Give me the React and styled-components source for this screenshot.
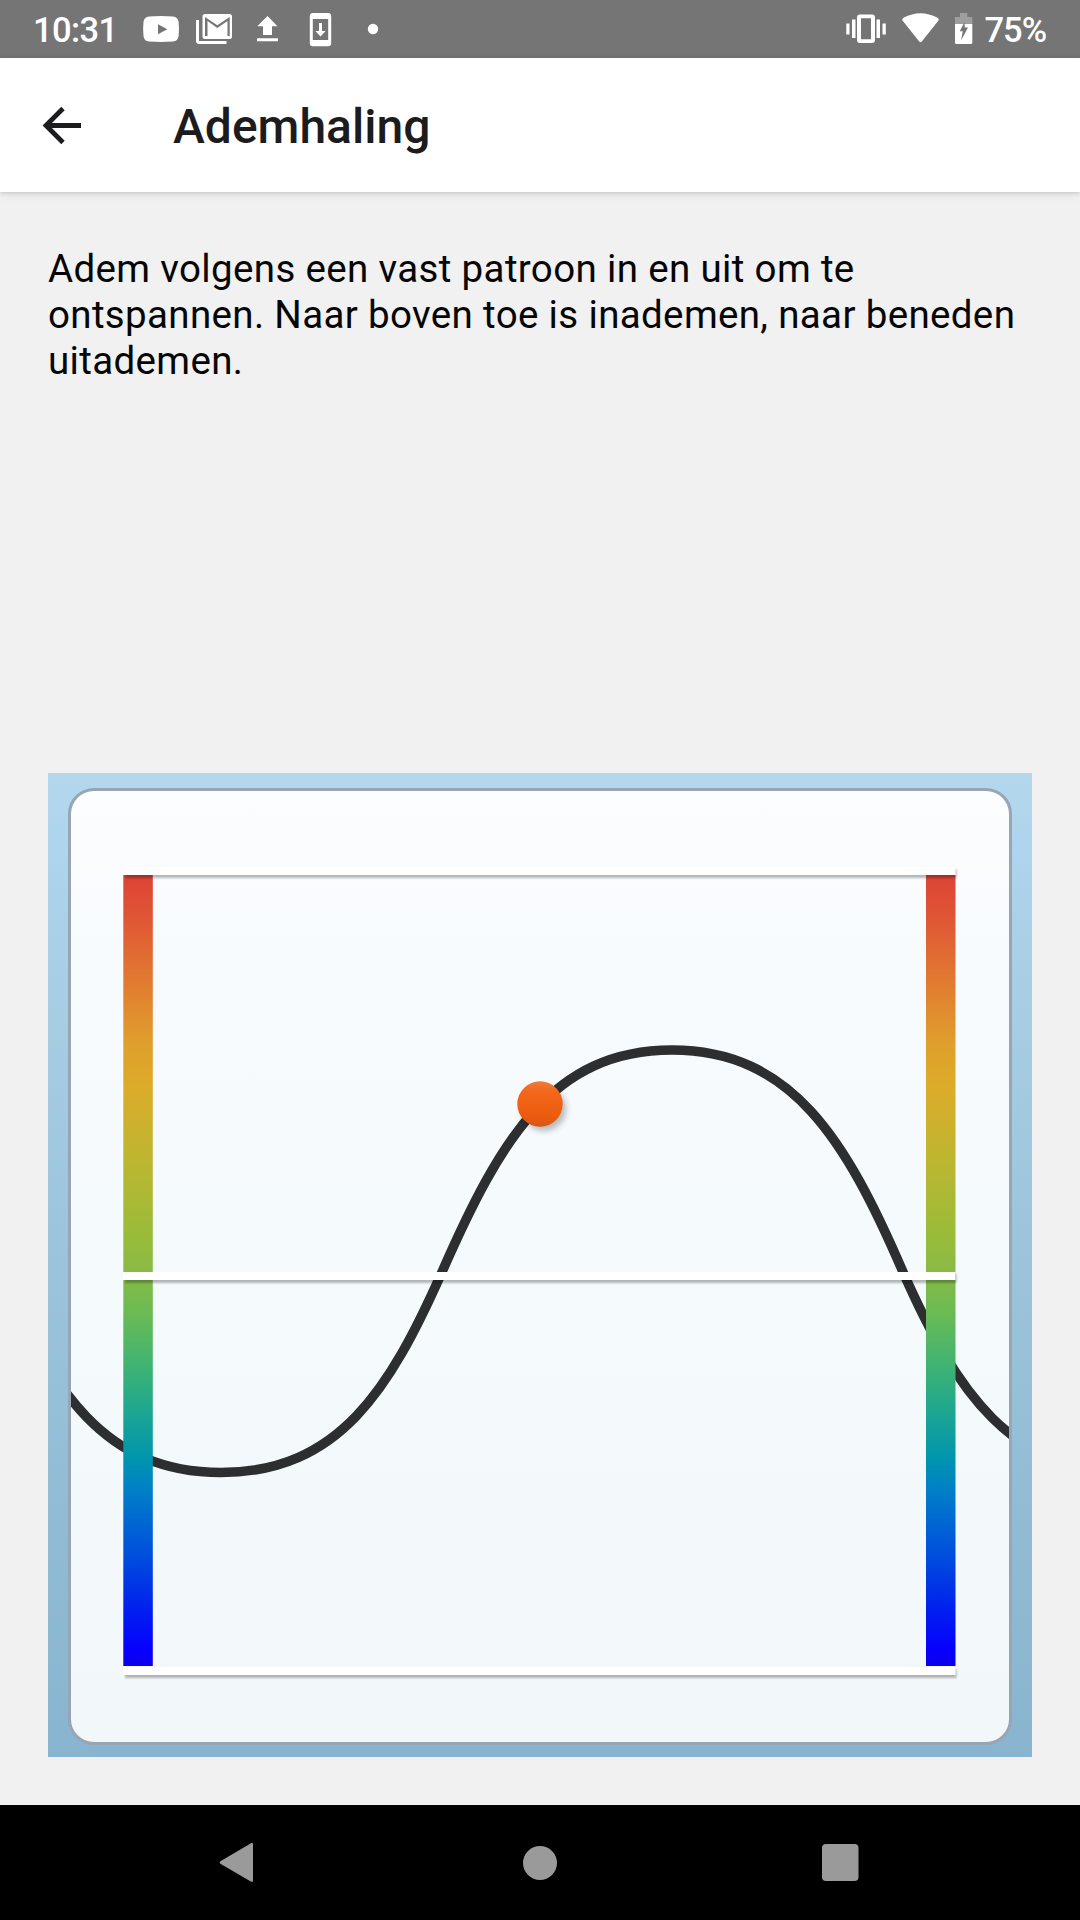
import React from "react";
import styled, { createGlobalStyle } from "styled-components";

const GlobalStyle = createGlobalStyle`
  *, *::before, *::after { box-sizing: border-box; }
  body { margin: 0; background: #f1f1f1; font-family: Roboto, "Noto Sans", sans-serif; }
`;

const Screen = styled.div`
  width: 1080px;
  height: 1920px;
  display: flex;
  flex-direction: column;
  overflow: hidden;
  background: #f1f1f1;
`;

const StatusBar = styled.header`
  height: 58px;
  flex: none;
  display: flex;
  align-items: center;
  justify-content: space-between;
  padding: 0 33px 0 33px;
  background: #757575;
  color: #fff;
`;

const StatusGroup = styled.div`
  display: flex;
  align-items: center;
  gap: ${(p) => p.$gap}px;
`;

const StatusText = styled.span`
  width: ${(p) => p.$width}px;
  font-size: 34.5px;
  font-weight: 500;
  line-height: 58px;
  letter-spacing: ${(p) => p.$spacing}px;
  white-space: nowrap;
  padding-top: 1px;
`;

const StatusIcons = styled.svg`
  display: block;
  flex: none;
  height: 58px;
  width: ${(p) => p.$width}px;
  fill: #fff;
`;

const AppBar = styled.nav`
  height: 134px;
  flex: none;
  display: flex;
  align-items: center;
  padding-left: 42px;
  background: #fff;
  box-shadow: 0 1px 4px rgba(0, 0, 0, 0.14), 0 3px 10px rgba(0, 0, 0, 0.07);
`;

const BackButton = styled.button`
  border: 0;
  padding: 0;
  width: 40px;
  height: 40px;
  margin-right: 91px;
  background: none;
  svg { display: block; }
`;

const Title = styled.h1`
  margin: 0;
  padding-top: 4px;
  font-size: 48px;
  line-height: 56px;
  font-weight: 500;
  color: #1c1c1e;
`;

const Content = styled.main`
  flex: 1;
  display: flex;
  flex-direction: column;
  justify-content: space-between;
  padding: 54px 48px 48px;
`;

const Instruction = styled.p`
  margin: 0;
  font-size: 38.5px;
  line-height: 46px;
  letter-spacing: 0.35px;
  color: #060606;
  white-space: pre-line;
`;

const Frame = styled.section`
  height: 984px;
  padding: 15px 20px 12px 20px;
  background: linear-gradient(180deg, #b3d7ec 0%, #aed4ee 8%, #a6cde2 25%, #9bc3dc 50%, #92bcd5 75%, #89b4cf 100%);
`;

const Panel = styled.div`
  height: 957px;
  border: 3px solid #98a5b5;
  border-radius: 26px;
  overflow: hidden;
  background: linear-gradient(180deg, #fcfdff 0%, #f8fbfe 16%, #f5fafc 50%, #f2f7fa 100%);
  svg { display: block; }
`;

const NavBar = styled.footer`
  height: 115px;
  flex: none;
  display: flex;
  align-items: center;
  justify-content: center;
  gap: 262px;
  background: #000;
`;

const NavIcon = styled.svg`
  display: block;
  width: 40px;
  height: 44px;
  fill: #9a9a9a;
`;

const scaleStops = [
  [0, "#dd4335"], [0.06, "#e05835"], [0.14, "#e17d30"], [0.215, "#dfa02c"],
  [0.27, "#dbac2a"], [0.36, "#bdb630"], [0.46, "#98bc3a"], [0.5, "#8aba45"],
  [0.55, "#6dbb52"], [0.6, "#4cb669"], [0.67, "#22a98c"], [0.74, "#0094b0"],
  [0.78, "#007ec8"], [0.87, "#0048e0"], [0.93, "#001ff0"], [0.98, "#0800fe"], [1, "#0a00e8"],
];

const guideLines = [
  { y: 867, height: 8 },
  { y: 1272, height: 8 },
  { y: 1667, height: 8 },
];

function BreathingChart() {
  return (
    <svg width="940" height="951" viewBox="71 791 940 951">
      <defs>
        <linearGradient id="scale" x1="0" y1="0" x2="0" y2="1">
          {scaleStops.map(([offset, color]) => (
            <stop key={offset} offset={offset} stopColor={color} />
          ))}
        </linearGradient>
        <linearGradient id="ball" x1="0" y1="0" x2="0" y2="1">
          <stop offset="0" stopColor="#ee7a3a" />
          <stop offset="0.25" stopColor="#f2661a" />
          <stop offset="0.75" stopColor="#ec5c0e" />
          <stop offset="1" stopColor="#d85616" />
        </linearGradient>
        <filter id="ballShadow" x="-50%" y="-50%" width="200%" height="200%">
          <feGaussianBlur stdDeviation="3" />
        </filter>
        <filter id="lineShadow" x="-5%" y="-100%" width="110%" height="300%">
          <feGaussianBlur stdDeviation="0.9" />
        </filter>
      </defs>
      <path
        d="M0 1272 C53 1391 104 1472.5 221 1472.5 C339 1472.5 390 1389 442 1272 C500 1140 552 1050 672 1050 C792 1050 846 1140 903 1272 C957 1394 1012 1472.5 1128 1472.5"
        fill="none"
        stroke="#2c2e30"
        strokeWidth="9.5"
      />
      <rect x="123.3" y="875" width="29.5" height="791" fill="url(#scale)" />
      <rect x="926" y="875" width="29.5" height="791" fill="url(#scale)" />
      {guideLines.map(({ y, height }) => (
        <g key={y}>
          <rect x="125" y={y + 2} width="831.5" height={height + 1} fill="#000" opacity="0.27" filter="url(#lineShadow)" />
          <rect x="123" y={y} width="832.5" height={height} fill="#fff" />
        </g>
      ))}
      <circle cx="544" cy="1109" r="22" fill="#000" opacity="0.26" filter="url(#ballShadow)" />
      <circle cx="540" cy="1104" r="22.7" fill="url(#ball)" />
    </svg>
  );
}

export default function App() {
  return (
    <Screen>
      <GlobalStyle />
      <StatusBar>
        <StatusGroup $gap={25}>
          <StatusText $width={82} $spacing={-0.6}>10:31</StatusText>
          <StatusIcons $width={244} viewBox="140 0 244 58">
            <path fillRule="evenodd" d="M149 16.5 Q161 15.6 173 16.5 Q178 17 178.6 22 Q179.4 29 178.6 36 Q178 41 173 41.5 Q161 42.4 149 41.5 Q144 41 143.5 36 Q142.7 29 143.5 22 Q144 17 149 16.5Z M158 24.3V34.3L167.3 29.3Z" />
            <path d="M196 20H199V41H226.5V44H199Q196 44 196 41Z" />
            <path fillRule="evenodd" d="M205 14H229.5Q232 14 232 16.5V36.5Q232 39 229.5 39H205Q202.5 39 202.5 36.5V16.5Q202.5 14 205 14Z M205 17V36H207.5V21L217.3 28L227.5 21V36H229.7V17L217.3 25.3Z" />
            <path d="M267.5 16L277.5 26.3H272V35H263V26.3H257.3Z M257 38.2H278V41.3H257Z" />
            <path fillRule="evenodd" d="M313 13H328Q331.2 13 331.2 16.2V43Q331.2 46.2 328 46.2H313Q309.8 46.2 309.8 43V16.2Q309.8 13 313 13Z M312.8 19V40H328.2V19Z" />
            <path d="M319 23H322V31H325.6L320.5 36.5L315.4 31H319Z" />
            <circle cx="373" cy="29" r="5.2" />
          </StatusIcons>
        </StatusGroup>
        <StatusGroup $gap={10.5}>
          <StatusIcons $width={130} viewBox="844 0 130 58">
            <path fillRule="evenodd" d="M860 14.5H872Q875 14.5 875 17.5V40Q875 43 872 43H860Q857 43 857 40V17.5Q857 14.5 860 14.5Z M861 18.3V39.2H871V18.3Z" />
            <path d="M846.3 23.5H849.5V34.5H846.3Z M852 19.5H855.5V38H852Z M876.5 19.5H880V38H876.5Z M882.5 23.5H885.8V34.5H882.5Z" />
            <path d="M902.5 20.5Q901.5 19 903.5 17.8Q920.5 8.5 937.5 17.8Q939.7 19 938.5 20.5L922 41.3Q920.5 43 919 41.3Z" />
            <path opacity="0.3" d="M960 13H967.3V17H972.3V24H955V17H960Z" />
            <path d="M955 24H972.3V42.5Q972.3 44 971 44H956.3Q955 44 955 42.5Z" />
            <path fill="#757575" d="M964.5 22L959.8 31.3H962.8L961 40.5L968 27.5H964.8Z" />
          </StatusIcons>
          <StatusText $width={62.5} $spacing={-1}>75%</StatusText>
        </StatusGroup>
      </StatusBar>
      <AppBar>
        <BackButton aria-label="Terug">
          <svg width="40" height="40" viewBox="42 105 40 40" fill="none" stroke="#1c1c1e" strokeWidth="4.8">
            <path d="M63 108.5L46 125.5L63 142.5M46 125.5H81" />
          </svg>
        </BackButton>
        <Title>Ademhaling</Title>
      </AppBar>
      <Content>
        <Instruction>{"Adem volgens een vast patroon in en uit om te\nontspannen. Naar boven toe is inademen, naar beneden\nuitademen."}</Instruction>
        <Frame>
          <Panel>
            <BreathingChart />
          </Panel>
        </Frame>
      </Content>
      <NavBar>
        <NavIcon viewBox="218 1841 40 44">
          <path d="M251 1843.3Q253 1842 253 1844.5V1880Q253 1882.8 250.8 1881.4L220.8 1864Q218.6 1862.5 220.8 1861Z" />
        </NavIcon>
        <NavIcon viewBox="520 1841 40 44">
          <circle cx="540" cy="1863" r="17" />
        </NavIcon>
        <NavIcon viewBox="822 1841 40 44">
          <rect x="822" y="1844" width="36.5" height="37" rx="4" />
        </NavIcon>
      </NavBar>
    </Screen>
  );
}
